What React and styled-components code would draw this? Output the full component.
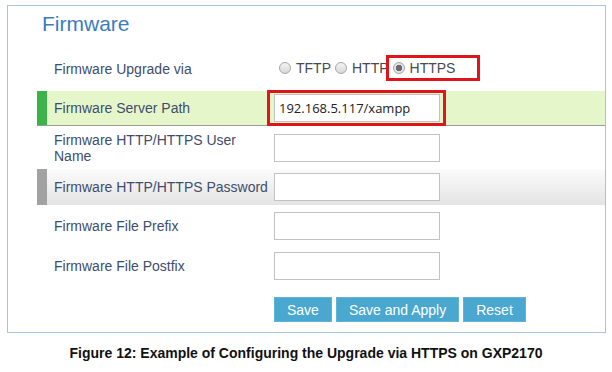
import styled, { createGlobalStyle } from "styled-components";

const GlobalStyle = createGlobalStyle`
  html, body {
    margin: 0;
    padding: 0;
    background: #ffffff;
    font-family: "Liberation Sans", Arial, sans-serif;
  }
`;

const rows = [
  { label: "Firmware Server Path", value: "192.168.5.117/xampp", tone: "green", height: 35, marked: true },
  { label: "Firmware HTTP/HTTPS User Name", height: 43 },
  { label: "Firmware HTTP/HTTPS Password", tone: "gray", height: 36 },
  { label: "Firmware File Prefix", height: 41 },
  { label: "Firmware File Postfix", height: 40 },
];

export default function App() {
  return (
    <>
      <GlobalStyle />
      <Page>
        <Panel>
          <Title>Firmware</Title>
          <Row $height={38} $gap={3}>
            <Bar />
            <Label>Firmware Upgrade via</Label>
            <Field>
              <RadioGroup>
                <Option>
                  <Radio />
                  TFTP
                </Option>
                <Option>
                  <Radio />
                  HTTP
                </Option>
                <Option $marked>
                  <Radio $checked />
                  HTTPS
                </Option>
              </RadioGroup>
            </Field>
          </Row>
          {rows.map((row) => (
            <Row key={row.label} $tone={row.tone} $height={row.height}>
              <Bar $tone={row.tone} />
              <Label>{row.label}</Label>
              <Field>
                <InputFrame $marked={row.marked}>
                  <Input defaultValue={row.value || ""} />
                </InputFrame>
              </Field>
            </Row>
          ))}
          <Buttons>
            <Button>Save</Button>
            <Button>Save and Apply</Button>
            <Button>Reset</Button>
          </Buttons>
        </Panel>
        <Caption>
          Figure 12: Example of Configuring the Upgrade via HTTPS on GXP2170
        </Caption>
      </Page>
    </>
  );
}

const Page = styled.div`
  width: 612px;
  height: 372px;
  padding: 5px 0 0 7px;
  box-sizing: border-box;
`;

const Panel = styled.section`
  width: 599px;
  box-sizing: border-box;
  border: 1px solid #a9c3de;
  padding: 0 0 10px 29px;
`;

const Title = styled.h2`
  margin: 0 0 0 5px;
  height: 44px;
  padding-top: 6px;
  box-sizing: border-box;
  font-size: 21px;
  line-height: 24px;
  font-weight: 400;
  color: #3b7cc0;
`;

const toneBg = {
  green: "#e6f6cb",
  gray: "linear-gradient(#fbfbfb, #e4e4e4)",
};

const Row = styled.div`
  display: flex;
  align-items: stretch;
  height: ${(p) => p.$height}px;
  margin-bottom: ${(p) => p.$gap || 0}px;
  box-sizing: border-box;
  background: ${(p) => toneBg[p.$tone] || "transparent"};
  border-bottom: ${(p) => (p.$tone === "green" ? "1px solid #9a9a9a" : "none")};
`;

const Bar = styled.div`
  width: 10px;
  flex: none;
  background: ${(p) =>
    p.$tone === "green" ? "#3cb34a" : p.$tone === "gray" ? "#a2a2a2" : "transparent"};
`;

const Label = styled.div`
  width: 227px;
  flex: none;
  box-sizing: border-box;
  padding: 0 0 0 7px;
  display: flex;
  align-items: center;
  font-size: 14px;
  line-height: 16px;
  color: #3e4d6c;
`;

const Field = styled.div`
  flex: 1;
  display: flex;
  align-items: center;
`;

const RadioGroup = styled.div`
  display: flex;
  align-items: center;
  padding-left: 5px;
  margin-top: -2px;
  font-size: 14px;
  color: #4a4a4a;
`;

const Option = styled.span`
  position: relative;
  display: flex;
  align-items: center;
  margin-right: 4px;
  line-height: 16px;

  &::after {
    content: "";
    display: ${(p) => (p.$marked ? "block" : "none")};
    position: absolute;
    left: -7px;
    right: -25px;
    top: -5px;
    bottom: -5px;
    border: 3px solid #e0141b;
  }
`;

const Radio = styled.span`
  width: 10px;
  height: 10px;
  margin-right: 5px;
  border-radius: 50%;
  border: 1px solid #a6a6a6;
  background: ${(p) =>
    p.$checked
      ? "radial-gradient(circle, #6a6a6a 0 3px, #e4e4e4 3.5px)"
      : "linear-gradient(#f4f4f4, #d8d8d8)"};
`;

const InputFrame = styled.span`
  position: relative;
  display: block;

  &::after {
    content: "";
    display: ${(p) => (p.$marked ? "block" : "none")};
    position: absolute;
    left: -7px;
    right: -6px;
    top: -4px;
    bottom: -4px;
    border: 3px solid #e0141b;
    pointer-events: none;
  }
`;

const Input = styled.input`
  display: block;
  width: 166px;
  height: 28px;
  box-sizing: border-box;
  border: 1px solid #c3c3c3;
  padding: 0 4px;
  font-family: "Open Sans", "DejaVu Sans", sans-serif;
  font-size: 13px;
  color: #222222;
  background: #ffffff;
  outline: none;
`;

const Buttons = styled.div`
  display: flex;
  gap: 4px;
  margin: 11px 0 0 237px;
`;

const Button = styled.button`
  height: 25px;
  padding: 0 12px;
  border: 1px solid #5fb4d8;
  background: #4aa7cf;
  color: #ffffff;
  font-family: "Liberation Sans", Arial, sans-serif;
  font-size: 14px;
  cursor: pointer;
`;

const Caption = styled.p`
  margin: 12px 0 0 -7px;
  text-align: center;
  font-size: 14px;
  line-height: 16px;
  font-weight: 700;
  color: #111111;
`;
